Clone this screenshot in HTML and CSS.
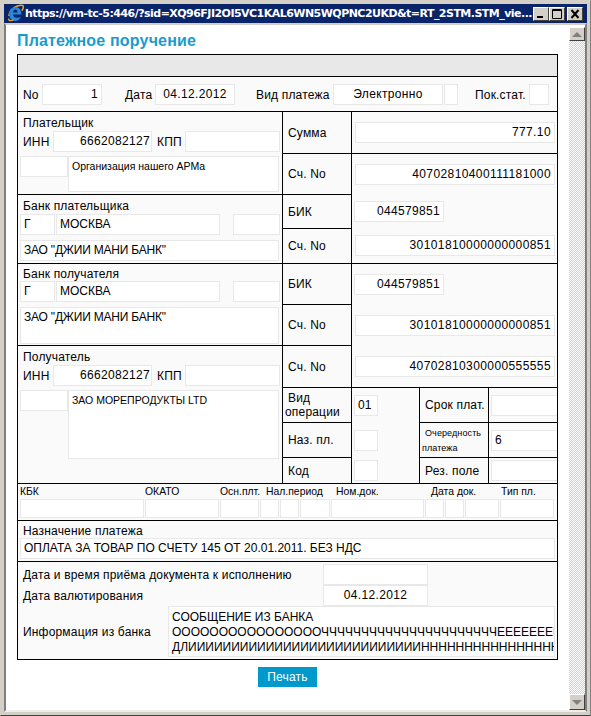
FILE: index.html
```html
<!doctype html>
<html lang="ru">
<head>
    <meta charset="UTF-8">
    <title>Платежное поручение</title>
    <link rel="stylesheet" href="styles.css">
</head>
<body>
<div class="window">
    <div class="titlebar">
        <svg class="ie-icon" viewBox="0 0 16 18" width="16" height="18">
            <path d="M1 12C0.5 8 5 3.5 10 1.8C12.8 0.8 15.4 0.8 15.4 2.8C15.4 4.3 14.6 5.8 13.8 6.8" fill="none" stroke="#e9a820" stroke-width="1.5"/>
            <path d="M1 10C1 6 4 3 7.5 3C11 3 13.5 6 13.5 10.5L5 10.5C5.2 13.8 9.5 14.8 12.8 12.8C12 15.5 9.8 17 7.5 17C4 17 1 14 1 10ZM5.1 8.5L9.6 8.5C9.4 6.6 8.6 5.4 7.4 5.4C6.2 5.4 5.3 6.6 5.1 8.5Z" fill="#2a86dc"/>
            <path d="M0.6 14.5C0.4 17 3 17.2 5.6 15.8" fill="none" stroke="#e9a820" stroke-width="1.3"/>
        </svg>
        <div class="titlebar-text">https://vm-tc-5:446/?sid=XQ96FJI2OI5VC1KAL6WN5WQPNC2UKD&amp;t=RT_2STM.STM_vie...</div>
        <div class="win-btn">
            <svg viewBox="0 0 14 12" width="14" height="12"><rect x="3" y="8" width="6" height="2" fill="#000"/></svg>
        </div>
        <div class="win-btn">
            <svg viewBox="0 0 14 12" width="14" height="12"><path d="M2.5 1.5H11.5V10.5H2.5ZM2.5 2.5H11.5" fill="none" stroke="#000"/></svg>
        </div>
        <div class="win-btn win-btn-close">
            <svg viewBox="0 0 14 12" width="14" height="12"><path d="M3.5 2L10.5 10M10.5 2L3.5 10" fill="none" stroke="#000" stroke-width="2"/></svg>
        </div>
    </div>

    <div class="client">
        <div class="page">
            <h1>Платежное поручение</h1>
            <table class="order">
                <colgroup>
                    <col class="col-left">
                    <col class="col-label">
                    <col class="col-a">
                    <col class="col-b">
                    <col class="col-c">
                </colgroup>
                <tr class="row-band"><td colspan="5" class="band"></td></tr>
                <tr class="row-head">
                    <td colspan="5">
                        <div class="head-line">
                            <span class="head-no">No</span>
                            <div class="field num w-no">1</div>
                            <span class="head-date">Дата</span>
                            <div class="field center w-date">04.12.2012</div>
                            <span class="head-kind">Вид платежа</span>
                            <div class="field center w-kind">Электронно</div>
                            <div class="field w-kind2"></div>
                            <span class="head-stat">Пок.стат.</span>
                            <div class="field w-stat"></div>
                        </div>
                    </td>
                </tr>
                <tr class="row-42">
                    <td rowspan="2">
                        <div class="party-title">Плательщик</div>
                        <div class="field-row">
                            <span class="inn-label">ИНН</span>
                            <div class="field num w-inn">6662082127</div>
                            <span class="kpp-label">КПП</span>
                            <div class="field w-kpp"></div>
                        </div>
                        <div class="field-row top gap-4">
                            <div class="field w-small"></div>
                            <div class="field small w-name h-36">Организация нашего АРМа</div>
                        </div>
                    </td>
                    <td class="label">Сумма</td>
                    <td colspan="3" class="pad-10">
                        <div class="field num w-account">777.10</div>
                    </td>
                </tr>
                <tr class="row-41">
                    <td class="label">Сч. No</td>
                    <td colspan="3" rowspan="3" class="pad-10">
                        <div class="field num w-account">40702810400111181000</div>
                        <div class="field num w-bik gap-16">044579851</div>
                        <div class="field num w-account gap-13">30101810000000000851</div>
                    </td>
                </tr>
                <tr class="row-34">
                    <td rowspan="2">
                        <div class="party-title">Банк плательщика</div>
                        <div class="field-row">
                            <div class="field w-city-g">Г</div>
                            <div class="field w-city">МОСКВА</div>
                            <div class="field w-city-x"></div>
                        </div>
                        <div class="field bank-name w-wide gap-5">ЗАО "ДЖИИ МАНИ БАНК"</div>
                    </td>
                    <td class="label">БИК</td>
                </tr>
                <tr class="row-35">
                    <td class="label">Сч. No</td>
                </tr>
                <tr class="row-41">
                    <td rowspan="2">
                        <div class="party-title tight">Банк получателя</div>
                        <div class="field-row">
                            <div class="field w-city-g">Г</div>
                            <div class="field w-city">МОСКВА</div>
                            <div class="field w-city-x"></div>
                        </div>
                        <div class="field bank-name w-wide h-37 gap-5">ЗАО "ДЖИИ МАНИ БАНК"</div>
                    </td>
                    <td class="label">БИК</td>
                    <td colspan="3" rowspan="3" class="pad-10">
                        <div class="field num w-bik">044579851</div>
                        <div class="field num w-account gap-20">30101810000000000851</div>
                        <div class="field num w-account gap-20">40702810300000555555</div>
                    </td>
                </tr>
                <tr class="row-41">
                    <td class="label">Сч. No</td>
                </tr>
                <tr class="row-42">
                    <td rowspan="4">
                        <div class="party-title">Получатель</div>
                        <div class="field-row">
                            <span class="inn-label">ИНН</span>
                            <div class="field num w-inn">6662082127</div>
                            <span class="kpp-label">КПП</span>
                            <div class="field w-kpp"></div>
                        </div>
                        <div class="field-row top gap-4">
                            <div class="field w-small"></div>
                            <div class="field small w-name h-69">ЗАО МОРЕПРОДУКТЫ LTD</div>
                        </div>
                    </td>
                    <td class="label">Сч. No</td>
                </tr>
                <tr class="row-35">
                    <td class="label label-wrap">Вид операции</td>
                    <td rowspan="3" class="cell-codes">
                        <div class="field w-code">01</div>
                        <div class="field w-code gap-14"></div>
                        <div class="field w-code gap-9"></div>
                    </td>
                    <td class="label">Срок плат.</td>
                    <td class="pad-7"><div class="field open w-last"></div></td>
                </tr>
                <tr class="row-35">
                    <td class="label">Наз. пл.</td>
                    <td class="label label-tiny">Очередность платежа</td>
                    <td class="pad-7"><div class="field open w-last">6</div></td>
                </tr>
                <tr class="row-26">
                    <td class="label">Код</td>
                    <td class="label">Рез. поле</td>
                    <td class="pad-2"><div class="field open w-last"></div></td>
                </tr>
                <tr class="row-37">
                    <td colspan="5">
                        <div class="budget-labels">
                            <span class="b-kbk">КБК</span>
                            <span class="b-okato">ОКАТО</span>
                            <span class="b-osn">Осн.плт.</span>
                            <span class="b-period">Нал.период</span>
                            <span class="b-num">Ном.док.</span>
                            <span class="b-date">Дата док.</span>
                            <span>Тип пл.</span>
                        </div>
                        <div class="budget-fields">
                            <div class="field"></div>
                            <div class="field"></div>
                            <div class="field"></div>
                            <div class="field"></div>
                            <div class="field"></div>
                            <div class="field"></div>
                            <div class="field"></div>
                            <div class="field"></div>
                            <div class="field"></div>
                            <div class="field"></div>
                            <div class="field"></div>
                        </div>
                    </td>
                </tr>
                <tr class="row-41">
                    <td colspan="5">
                        <div class="party-title tight">Назначение платежа</div>
                        <div class="field w-purpose">ОПЛАТА ЗА ТОВАР ПО СЧЕТУ 145 ОТ 20.01.2011. БЕЗ НДС</div>
                    </td>
                </tr>
                <tr class="row-98">
                    <td colspan="5" class="pad-2">
                        <div class="field-row">
                            <span class="bank-label">Дата и время приёма документа к исполнению</span>
                            <div class="field w-bank-date"></div>
                        </div>
                        <div class="field-row">
                            <span class="bank-label">Дата валютирования</span>
                            <div class="field center w-bank-date">04.12.2012</div>
                        </div>
                        <div class="field-row">
                            <span class="info-label">Информация из банка</span>
                            <div class="field w-info">СООБЩЕНИЕ ИЗ БАНКА<br>ООООООООООООООООЧЧЧЧЧЧЧЧЧЧЧЧЧЧЧЧЧЧЧЧЧЧЕЕЕЕЕЕЕЕЕЕЕЕЕЕЕЕЕ<br>ДЛИИИИИИИИИИИИИИИИИИИИИИИИИИИНННННННННННННННННННННННННННН</div>
                        </div>
                    </td>
                </tr>
            </table>
            <button class="print">Печать</button>
        </div>

        <div class="scrollbar">
            <div class="scroll-btn"><span class="arrow-up"></span></div>
            <div class="scroll-track"></div>
            <div class="scroll-btn"><span class="arrow-down"></span></div>
        </div>
    </div>
</div>
</body>
</html>
```

FILE: styles.css
```css
html, body {
    margin: 0;
    padding: 0;
    height: 100%;
    overflow: hidden;
}

body {
    font-family: "Liberation Sans", Arial, sans-serif;
    font-size: 12px;
    letter-spacing: 0.18px;
    color: #000;
}

.window {
    display: flex;
    flex-direction: column;
    height: 716px;
    padding: 3px;
    box-sizing: border-box;
    background-color: #d4d0c8;
    border: 1px solid #d4d0c8;
    border-right-color: #808080;
    border-bottom-color: #404040;
}

.titlebar {
    display: flex;
    align-items: center;
    flex-shrink: 0;
    height: 19px;
    padding-left: 4px;
    background-color: #0a246a;
}

.ie-icon {
    flex-shrink: 0;
    margin-top: -2px;
}

.titlebar-text {
    width: 508px;
    margin-left: 1px;
    font-family: "DejaVu Sans", sans-serif;
    font-size: 11px;
    font-weight: bold;
    letter-spacing: -0.53px;
    color: #fff;
    white-space: nowrap;
    overflow: hidden;
}

.win-btn {
    display: flex;
    flex-shrink: 0;
    box-sizing: border-box;
    width: 16px;
    height: 14px;
    background-color: #d4d0c8;
    border: 1px solid;
    border-color: #fff #404040 #404040 #fff;
}

.win-btn-close {
    margin-left: 2px;
}

.client {
    display: flex;
    flex: 1;
    min-height: 0;
    background-color: #fff;
    border: 2px solid #808080;
    border-top-color: #d4d0c8;
    border-bottom-color: #f0eee8;
}

.page {
    flex: 1;
    padding-left: 11px;
    overflow: hidden;
}

h1 {
    margin: 0;
    height: 24px;
    padding-top: 5px;
    font-size: 16px;
    line-height: 22px;
    font-weight: bold;
    color: #1a9bcb;
}

/* form table */
.order {
    table-layout: fixed;
    width: 541px;
    border-collapse: collapse;
    background-color: #fafafa;
}

.order td {
    padding: 0;
    border: 1px solid #000;
    vertical-align: top;
}

.col-left { width: 265px; }
.col-label { width: 69px; }
.col-a { width: 68px; }
.col-b { width: 69px; }
.col-c { width: 69px; }

.row-band { height: 22px; }
.row-head { height: 35px; }
.row-26 { height: 26px; }
.row-34 { height: 34px; }
.row-35 { height: 35px; }
.row-37 { height: 37px; }
.row-41 { height: 41px; }
.row-42 { height: 42px; }
.row-98 { height: 98px; }

.order .band {
    background-color: #e8e8e8;
}

.order .label {
    padding-left: 5px;
    vertical-align: middle;
}

.order .label-wrap {
    padding-left: 2px;
    text-indent: 3px;
    line-height: 14px;
}

.order .label-tiny {
    padding: 2px 0 0 2px;
    text-indent: 3px;
    font-size: 9px;
    letter-spacing: 0.1px;
    line-height: 15px;
}

.order .pad-10 { padding: 10px 0 0 2px; }
.order .pad-7 { padding: 7px 0 0 2px; }
.order .pad-2 { padding: 2px 0 0 2px; }
.order .cell-codes { padding: 7px 0 0 2px; }

/* inputs drawn as read-only boxes */
.field {
    flex-shrink: 0;
    box-sizing: border-box;
    height: 21px;
    padding: 0 3px;
    background-color: #fff;
    border: 1px solid #e8e8e8;
    letter-spacing: 0;
    line-height: 19px;
    white-space: nowrap;
    overflow: hidden;
}

.num { text-align: right; letter-spacing: 0.33px; }
.center { text-align: center; letter-spacing: 0.33px; }
.small { font-size: 10.5px; padding-top: 2px; line-height: 15px; }
.open { border-right: none; }
.bank-name { letter-spacing: -0.2px; }

.field-row {
    display: flex;
    align-items: center;
}

.top { align-items: flex-start; }

.party-title {
    height: 15px;
    padding: 4px 0 0 5px;
    line-height: 15px;
}

.party-title.tight {
    height: 14px;
    padding-top: 3px;
}

.gap-4 { margin-top: 4px; }
.gap-5 { margin-top: 5px; }
.gap-9 { margin-top: 9px; }
.gap-13 { margin-top: 13px; }
.gap-14 { margin-top: 14px; }
.gap-16 { margin-top: 16px; }
.gap-20 { margin-top: 20px; }

.head-line {
    display: flex;
    align-items: center;
    height: 34px;
    padding-top: 1px;
    padding-left: 5px;
    box-sizing: border-box;
    white-space: nowrap;
}

.head-no { width: 19px; }
.head-date { margin-left: 23px; width: 30px; }
.head-kind { margin-left: 21px; width: 77px; }
.head-stat { margin-left: 17px; width: 54px; }

.w-no { width: 60px; }
.w-date { width: 80px; }
.w-kind { width: 110px; }
.w-kind2 { width: 14px; margin-left: 1px; }
.w-stat { width: 20px; }

.inn-label { width: 30px; margin-left: 5px; }
.kpp-label { width: 28px; margin-left: 5px; }
.w-inn { width: 99px; padding-right: 1px; }
.w-kpp { width: 95px; }

.field-row .w-small,
.field-row .w-city-g {
    margin-left: 2px;
}

.w-small { width: 48px; }
.w-name { width: 211px; }
.h-36 { height: 36px; }
.h-37 { height: 37px; }
.h-69 { height: 69px; }

.w-city-g { width: 35px; }
.w-city { width: 164px; margin-left: 1px; }
.w-city-x { width: 47px; margin-left: 13px; }
.w-wide { width: 259px; margin-left: 2px; }

.w-account { width: 200px; margin-left: 1px; padding-right: 3px; letter-spacing: 0.4px; }
.w-bik { width: 90px; padding-right: 3px; }
.w-code { width: 24px; }
.w-last { width: 66px; }

/* budget row */
.budget-labels {
    display: flex;
    height: 15px;
    padding-left: 2px;
    font-size: 10.4px;
    letter-spacing: 0;
    line-height: 16px;
    white-space: nowrap;
}

.b-kbk { width: 125px; }
.b-okato { width: 75px; }
.b-osn { width: 46px; }
.b-period { width: 70px; }
.b-num { width: 95px; }
.b-date { width: 70px; }

.budget-fields {
    display: grid;
    grid-template-columns: 124px 74px 39px 19px 19px 30px 93px 19px 19px 34px 54px;
    column-gap: 1px;
    padding-left: 2px;
}

.budget-fields .field {
    height: 19px;
}

.w-purpose { width: 535px; margin-left: 2px; }

.bank-label { width: 300px; margin-left: 3px; white-space: nowrap; }
.info-label { width: 145px; margin-left: 3px; }
.w-bank-date { width: 105px; }
.w-info { width: 387px; height: 51px; line-height: 15px; padding-top: 3px; }

.print {
    display: block;
    width: 59px;
    height: 20px;
    margin: 7px 0 0 241px;
    padding: 0;
    background-color: #0099cc;
    border: none;
    color: #fff;
    font-family: "Liberation Sans", Arial, sans-serif;
    font-size: 12px;
    letter-spacing: 0.18px;
}

/* scrollbar */
.scrollbar {
    display: flex;
    flex-direction: column;
    flex-shrink: 0;
    width: 16px;
    padding-top: 2px;
}

.scroll-btn {
    display: flex;
    align-items: center;
    justify-content: center;
    box-sizing: border-box;
    height: 14px;
    background-color: #d4d0c8;
    border: 1px solid;
    border-color: #fff #404040 #404040 #fff;
}

.scrollbar .scroll-btn:last-child {
    height: 16px;
}

.scroll-track {
    flex: 1;
    background: repeating-conic-gradient(#d4d0c8 0% 25%, #fff 0% 50%) 0 0 / 2px 2px;
}

.arrow-up {
    border: 5px solid transparent;
    border-top: none;
    border-bottom-color: #808080;
}

.arrow-down {
    border: 5px solid transparent;
    border-bottom: none;
    border-top-color: #808080;
}
```
